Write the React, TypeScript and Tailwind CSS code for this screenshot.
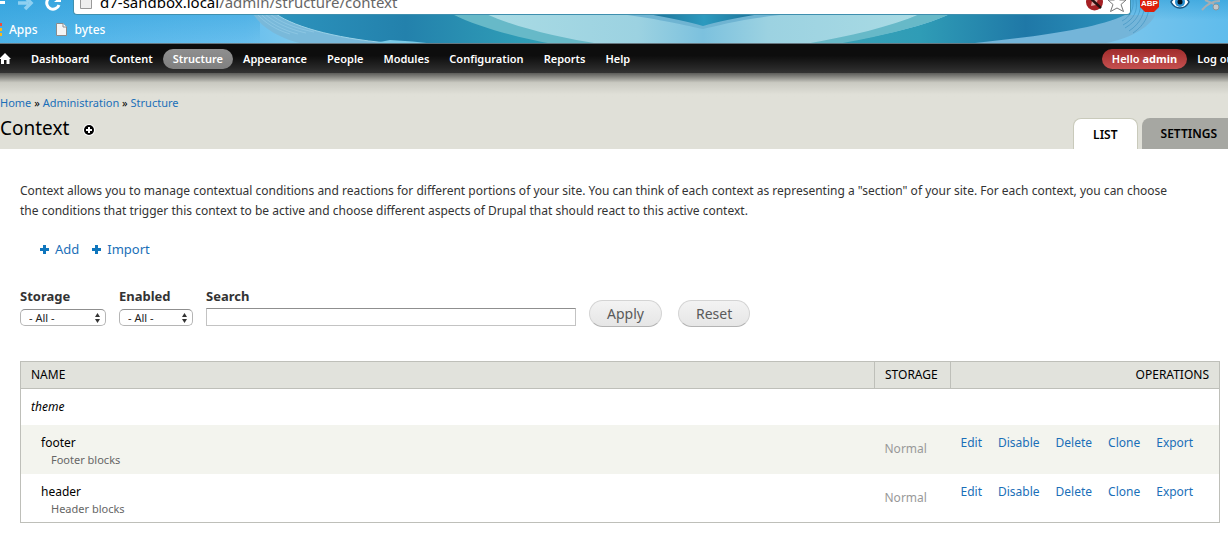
import React from "react";

const navItems = ["Dashboard", "Content", "Structure", "Appearance", "People", "Modules", "Configuration", "Reports", "Help"];
const operations = ["Edit", "Disable", "Delete", "Clone", "Export"];
const contexts = [
  { name: "footer", description: "Footer blocks" },
  { name: "header", description: "Header blocks" },
];

function ThemeBackdrop() {
  return (
    <svg className="absolute inset-0 h-full w-full" viewBox="0 0 1228 44" preserveAspectRatio="none" aria-hidden="true">
      <defs>
        <linearGradient id="sky" x1="0" x2="1" y1="0" y2="0">
          <stop offset="0" stopColor="#4eb3e8" />
          <stop offset="0.2" stopColor="#68bfee" />
          <stop offset="0.26" stopColor="#86ccec" />
          <stop offset="0.85" stopColor="#8ccbec" />
          <stop offset="1" stopColor="#5fbcec" />
        </linearGradient>
        <linearGradient id="top" x1="0" x2="0" y1="0" y2="1">
          <stop offset="0" stopColor="#1b94d2" stopOpacity="0.45" />
          <stop offset="1" stopColor="#1b94d2" stopOpacity="0" />
        </linearGradient>
        <linearGradient id="waveLeft" x1="0" x2="1" y1="0" y2="0">
          <stop offset="0" stopColor="#2c93bd" />
          <stop offset="0.4" stopColor="#2381ac" />
          <stop offset="0.75" stopColor="#2f9cb6" />
          <stop offset="1" stopColor="#3aa2b8" />
        </linearGradient>
        <linearGradient id="waveRight" x1="0" x2="1" y1="0" y2="0">
          <stop offset="0" stopColor="#3aa2b8" />
          <stop offset="0.3" stopColor="#2f9cb6" />
          <stop offset="0.65" stopColor="#1f78a7" />
          <stop offset="1" stopColor="#2c93bd" />
        </linearGradient>
        <linearGradient id="centre" x1="0" x2="1" y1="0" y2="0">
          <stop offset="0" stopColor="#a9dbe4" />
          <stop offset="0.35" stopColor="#9cd2e1" />
          <stop offset="0.5" stopColor="#7cc1de" />
          <stop offset="0.65" stopColor="#9cd2e1" />
          <stop offset="1" stopColor="#a9dbe4" />
        </linearGradient>
        <linearGradient id="chevron" x1="0" x2="1" y1="0" y2="0">
          <stop offset="0" stopColor="#1b6f95" />
          <stop offset="0.5" stopColor="#2c9abf" />
          <stop offset="1" stopColor="#1b6f95" />
        </linearGradient>
      </defs>
      <rect width="1228" height="44" fill="url(#sky)" />
      <rect width="260" height="44" fill="url(#top)" />
      <rect x="1131" width="97" height="20" fill="url(#top)" />
      <path d="M253 14C262 28 280 39 304 44H440L285 14Z" fill="#79b9da" />
      <g fill="none" stroke="#a6d9ef" strokeWidth="0.4">
        <path d="M257 14C264 22 276 30 290 34M261 14C268 22 282 30 298 34M265 14C274 22 288 29 306 33M270 14C280 22 294 28 314 32" />
      </g>
      <path d="M276 14C296 28 342 40 400 44H600L452 14Z" fill="url(#waveLeft)" />
      <path d="M276 14C296 28 342 40 400 44" fill="none" stroke="#9bd2e8" strokeWidth="1" />
      <path d="M390 40Q412 41 436 44H370Z" fill="#7bcbe8" />
      <path d="M452 14C480 28 520 38 553 44H625L500 14Z" fill="#67b9c8" />
      <path d="M486 14C515 27 560 38 600 44H810C850 38 890 28 920 14Z" fill="url(#centre)" />
      <path d="M620 14C660 19 688 26 703 29C720 25 745 18 790 14Z" fill="#6fb4d2" />
      <path d="M648 14C670 18 690 22 703 26C716 22 736 18 760 14Z" fill="url(#chevron)" />
      <path d="M950 14C920 28 870 38 830 44H990C1060 36 1110 28 1131 14Z" fill="url(#waveRight)" />
      <path d="M920 14C890 27 850 36 805 44H838C870 38 920 28 950 14Z" fill="#67b9c8" />
      <path d="M975 43C1040 36 1095 29 1125 15H1155C1150 28 1125 41 1100 44H975Z" fill="#74b5d9" />
      <g fill="none" stroke="#3a90c0" strokeWidth="0.6">
        <path d="M1133 0C1134 9 1130 17 1122 21M1136 0C1138 11 1134 19 1123 25M1140 0C1142 12 1137 21 1125 28M1144 0C1146 12 1141 23 1129 31M1148 0C1151 13 1145 25 1133 33" />
      </g>
      <rect y="43" width="1228" height="1" fill="#667780" />
    </svg>
  );
}

function PageIcon() {
  return (
    <svg width="11" height="13" viewBox="0 0 11 13" aria-hidden="true">
      <path d="M0.5 0.5H7L10.5 4V12.5H0.5Z" fill="#f5f5f5" stroke="#8c8c8c" />
      <path d="M7 0.5V4H10.5" fill="#fff" stroke="#8c8c8c" />
    </svg>
  );
}

function BrowserChrome() {
  return (
    <header className="relative flex h-11 flex-col justify-end overflow-hidden font-['Noto_Sans','Lucida_Grande',sans-serif]">
      <ThemeBackdrop />
      <div className="relative flex h-6 shrink-0 items-stretch">
        <svg className="shrink-0" width="73" height="24" viewBox="0 0 73 24" fill="none" aria-hidden="true">
          <path d="M0 11.5H5" stroke="#fff" strokeWidth="3" />
          <path d="M18 12H28M25 6L31 12L25 18" stroke="#8fd0f1" strokeWidth="3.5" />
          <path d="M59 14A6.3 6.3 0 1 1 57 7" stroke="#fff" strokeWidth="3" />
          <path d="M54 11H61V5Z" fill="#fff" />
        </svg>
        <div className="flex min-w-0 grow items-start rounded-b border border-t-0 border-[#3f8fae] bg-white pl-1.5">
          <svg className="mt-0.5" width="12" height="16" viewBox="0 0 12 16" aria-hidden="true">
            <path d="M0.5 0.5H7L11.5 5V15.5H0.5Z" fill="#eee" stroke="#999" />
          </svg>
          <div role="textbox" aria-label="Address" tabIndex={0} className="ml-2 grow text-[15px] leading-[23px] whitespace-nowrap text-[#666]">
            <span className="text-black">d7-sandbox.local</span>/admin/structure/context
          </div>
          <svg width="44" height="22" viewBox="0 0 44 22" aria-hidden="true">
            <circle cx="8.500" cy="11" r="8.500" fill="#a52024" />
            <path d="M7 5L12 8L10 14L5 15Z" fill="#e3a3a1" />
            <path d="M2 5L15 17" stroke="#26100f" strokeWidth="2.500" />
            <path d="M31 2L33.500 9H40L35 13.500L37.500 20.500L31 17L24.500 20.500L27 13.500L22 9H28.500Z" fill="#fff" stroke="#777" />
          </svg>
        </div>
        <svg className="shrink-0" width="97" height="24" viewBox="0 0 97 24" aria-hidden="true">
          <path d="M14 2H23L28 7V16L23 21H14L9 16V7Z" fill="#dc1f0b" />
          <text x="10" y="15" fontSize="8" fontWeight="bold" fill="#fff" fontFamily="Liberation Sans">ABP</text>
          <path d="M40 11C44 4 54 4 58 11C54 19 44 19 40 11Z" fill="#fff" stroke="#17527d" strokeWidth="1.500" />
          <circle cx="49" cy="11" r="5" fill="#2a8fd0" />
          <circle cx="49" cy="11" r="2.500" fill="#06121c" />
          <path d="M71 19C76 13 82 10 89 10M74 9L83 13" fill="none" stroke="#a8aeb2" strokeWidth="2" />
          <circle cx="85" cy="16" r="3" fill="#c3c7c9" stroke="#8d9498" />
        </svg>
      </div>
      <div className="relative flex h-[29px] shrink-0 items-center text-[12px] font-medium text-white">
        <svg width="9" height="13" viewBox="0 0 9 13" aria-hidden="true">
          <path d="M0 0H2V3H0Z" fill="#f04a3a" />
          <path d="M0 5H2V8H0ZM0 10H2V13H0Z" fill="#fbb917" />
        </svg>
        <a href="#apps">Apps</a>
        <a href="#bytes" className="ml-[18px] flex items-center gap-2"><PageIcon />bytes</a>
      </div>
    </header>
  );
}

function AdminBar() {
  return (
    <nav className="flex h-[29px] items-center overflow-hidden bg-linear-to-b from-[#0d0d0d] from-40% to-[#333] font-['Noto_Sans','Lucida_Grande',sans-serif] text-[11px] font-semibold whitespace-nowrap text-white">
      <a href="#home" aria-label="Home" className="mr-2.5 shrink-0">
        <svg width="11" height="11" viewBox="0 0 11 11" fill="#fff" aria-hidden="true">
          <path d="M5 0L11 6H9.500V11H6.500V7H4V11H1V6H0V5Z" />
        </svg>
      </a>
      {navItems.map((item) => (
        <a
          key={item}
          href={"#" + item.toLowerCase()}
          className={item === "Structure" ? "h-5 rounded-full bg-linear-to-b from-[#8f8f8f] to-[#808080] px-2.5 leading-5" : "h-5 px-2.5 leading-5"}
        >
          {item}
        </a>
      ))}
      <div className="-mr-5 ml-auto flex shrink-0 items-center">
        <a href="#account" className="h-5 rounded-full bg-linear-to-b from-[#a02c2c] to-[#c55050] px-2.5 leading-5">Hello <span className="font-bold">admin</span></a>
        <a href="#logout" className="h-5 px-2.5 leading-5">Log out</a>
      </div>
    </nav>
  );
}

function Branding() {
  return (
    <div className="bg-[#e0e0d8]">
      <div className="h-6 bg-linear-to-b from-[#5c5c59] via-[#c9c9c1] via-40% to-[#e0e0d8] to-90%" />
      <div className="flex items-end justify-between overflow-hidden">
        <div className="pb-2.5">
          <p className="text-[11px] leading-3 text-black">
            <a href="#home" className="text-[#1a6fb8]">Home</a> »{" "}
            <a href="#administration" className="text-[#1a6fb8]">Administration</a> »{" "}
            <a href="#structure" className="text-[#1a6fb8]">Structure</a>
          </p>
          <div className="mt-2 flex items-center gap-3.5">
            <h1 className="text-[19px] leading-[22px] text-black">Context</h1>
            <button type="button" aria-label="Add to shortcuts" className="pt-1">
              <svg width="12" height="12" viewBox="0 0 12 12" aria-hidden="true">
                <circle cx="6" cy="6" r="6" fill="#fff" />
                <circle cx="6" cy="6" r="5" fill="#000" />
                <path d="M6 3V9M3 6H9" stroke="#fff" strokeWidth="2" />
              </svg>
            </button>
          </div>
        </div>
        <div className="-mr-2 flex gap-1 text-[12px] font-semibold text-black">
          <a href="#list" className="h-[31px] rounded-t-lg border border-b-0 border-[#c9cabb] bg-white px-[19px] leading-8">LIST</a>
          <a href="#settings" className="h-[31px] rounded-t-lg bg-[#a6a7a2] px-[19px] leading-8">SETTINGS</a>
        </div>
      </div>
    </div>
  );
}

function PlusLink({ label }: { label: string }) {
  return (
    <a href={"#" + label.toLowerCase()} className="flex items-center gap-1.5 text-[13px] leading-5 text-[#1a6fb8]">
      <svg width="9" height="9" viewBox="0 0 9 9" fill="#0f76bd" aria-hidden="true">
        <path d="M3 0H6V3H9V6H6V9H3V6H0V3H3Z" />
      </svg>
      {label}
    </a>
  );
}

function AllSelect({ id, label, wide }: { id: string; label: string; wide: boolean }) {
  return (
    <div className="flex flex-col pb-px">
      <label htmlFor={id} className="mb-[5px] text-[13px] leading-4 font-bold text-[#333]">{label}</label>
      <div className={wide ? "relative w-[86px]" : "relative w-[74px]"}>
        <select
          id={id}
          className="block h-[17px] w-full appearance-none rounded-[5px] border border-[#b5b5b5] border-t-[#8f8f8f] bg-white pl-2 text-[11px] leading-3 text-[#222]"
        >
          <option>- All -</option>
        </select>
        <svg className="pointer-events-none absolute top-1 right-1.5" width="5" height="10" viewBox="0 0 5 10" fill="#333" aria-hidden="true">
          <path d="M2.500 0L5 4H0ZM2.500 10L0 6H5Z" />
        </svg>
      </div>
    </div>
  );
}

const buttonClass =
  "h-[27px] rounded-full border border-[#d4d4d4] border-b-[#b4b4b4] bg-linear-to-b from-[#f3f3f3] to-[#e6e6e6] px-[17px] text-[14px] leading-6 text-[#5a5a5a]";

export default function App() {
  return (
    <div className="min-h-screen overflow-hidden bg-white font-['Noto_Sans','Lucida_Grande',sans-serif]">
      <BrowserChrome />
      <AdminBar />
      <Branding />
      <main className="pt-8 pr-2 pb-4 pl-5">
        <p className="pr-10 text-[12px] leading-5 text-[#333]">
          Context allows you to manage contextual conditions and reactions for different portions of your site. You can think of each context as representing a "section" of your site. For each context, you can choose the conditions that trigger this context to be active and choose different aspects of Drupal that should react to this active context.
        </p>
        <div className="mt-[18px] ml-5 flex gap-[13px]">
          <PlusLink label="Add" />
          <PlusLink label="Import" />
        </div>
        <form className="mt-[29px] flex items-end" onSubmit={(event) => event.preventDefault()}>
          <AllSelect id="storage" label="Storage" wide />
          <div className="ml-[13px]">
            <AllSelect id="enabled" label="Enabled" wide={false} />
          </div>
          <div className="ml-[13px] flex flex-col pb-px">
            <label htmlFor="search" className="mb-1 text-[13px] leading-4 font-bold text-[#333]">Search</label>
            <input id="search" className="h-[18px] w-[370px] border border-[#c3c3c3] border-t-[#8f8f8f] bg-white px-1 text-[12px]" />
          </div>
          <button type="submit" className={"ml-[13px] " + buttonClass}>Apply</button>
          <button type="reset" className={"ml-4 " + buttonClass}>Reset</button>
        </form>
        <table className="mt-[34px] w-full table-fixed border-collapse border border-[#bebfb9] text-[12px] text-black">
          <colgroup>
            <col />
            <col className="w-[76px]" />
            <col className="w-[269px]" />
          </colgroup>
          <thead>
            <tr className="h-[27px] border-b border-[#bebfb9] bg-[#e1e2dc]">
              <th className="px-2.5 text-left font-normal">NAME</th>
              <th className="border-x border-[#bebfb9] px-2.5 text-left font-normal">STORAGE</th>
              <th className="px-2.5 text-right font-normal">OPERATIONS</th>
            </tr>
          </thead>
          <tbody>
            <tr className="h-9">
              <td colSpan={3} className="px-2.5 italic">theme</td>
            </tr>
            {contexts.map((context) => (
              <tr key={context.name} className="h-[49px] odd:bg-white even:bg-[#f3f4ee]">
                <td className="pt-[9px] pl-5 align-top leading-[18px]">
                  {context.name}
                  <div className="pl-2.5 text-[11px] leading-4 text-[#666]">{context.description}</div>
                </td>
                <td className="px-2.5 text-[#999]">Normal</td>
                <td className="pt-[9px] pl-2.5 align-top leading-[18px]">
                  <div className="flex gap-4">
                    {operations.map((operation) => (
                      <a key={operation} href={"#" + operation.toLowerCase()} className="text-[#1a6fb8]">{operation}</a>
                    ))}
                  </div>
                </td>
              </tr>
            ))}
          </tbody>
        </table>
      </main>
    </div>
  );
}
